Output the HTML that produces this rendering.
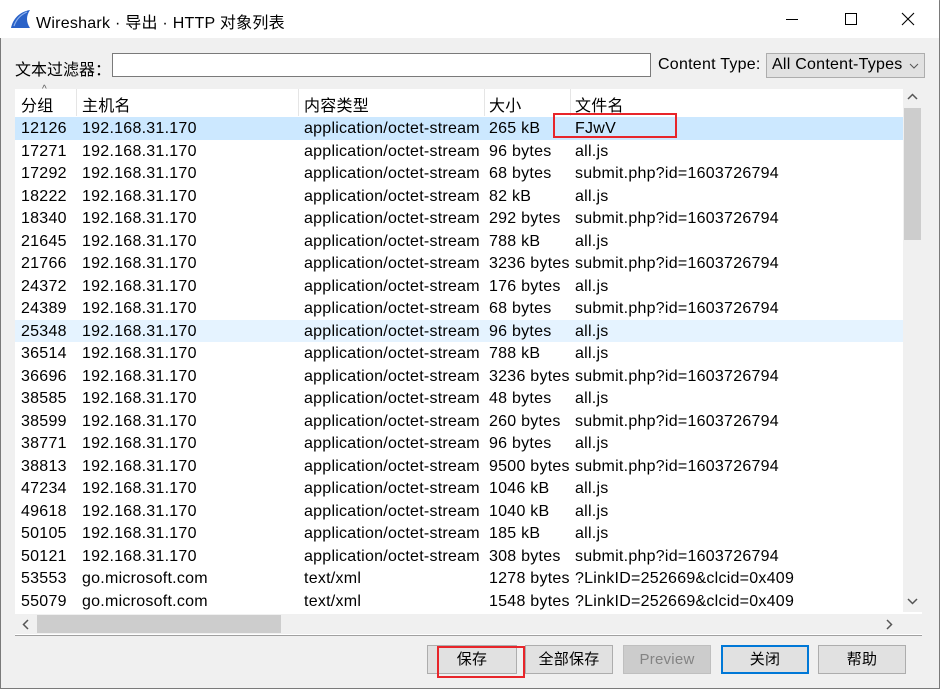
<!DOCTYPE html>
<html><head><meta charset="utf-8"><style>
*{margin:0;padding:0;box-sizing:border-box}
body{width:940px;height:689px;overflow:hidden;background:#f0f0f0;font-family:"Liberation Sans","Noto Sans CJK SC",sans-serif;font-size:16px;letter-spacing:0.25px;color:#000;position:relative}
.abs{position:absolute}
#win{position:absolute;left:0;top:0;width:940px;height:689px;border:1px solid #7a7a7a;border-top-color:#8a8a8a}
#title{position:absolute;left:0;top:0;width:939px;height:38px;background:#fff}
.row{position:absolute;left:15px;width:888px;height:22.5px;white-space:nowrap}
.row span{position:absolute;top:3px}
.btn{position:absolute;top:645px;height:29px;border:1px solid #adadad;background:#e1e1e1;text-align:center;line-height:27px;font-size:15px}
.cjk{letter-spacing:0}
</style></head><body>
<div id="win"></div>
<div id="title">
 <svg class="abs" style="left:10px;top:9px" width="22" height="20" viewBox="0 0 22 20"><path d="M1 19 C3 10 9 3 20 1 C16 7 16 13 20 19 Z" fill="#2a62c8"/><path d="M4 17 C6 11 10 6 17 3" stroke="#8fb2ec" stroke-width="1.2" fill="none"/></svg>
 <div class="abs" style="left:36px;top:9px;font-size:16px">Wireshark · 导出 · HTTP 对象列表</div>
 <div class="abs" style="left:786px;top:19px;width:12px;height:1px;background:#000"></div>
 <div class="abs" style="left:845px;top:13px;width:12px;height:12px;border:1px solid #000"></div>
 <svg class="abs" style="left:901px;top:12px" width="14" height="14"><path d="M1 1L13 13M13 1L1 13" stroke="#000" stroke-width="1.1"/></svg>
</div>
<div class="abs cjk" style="left:15px;top:56px">文本过滤器：</div>
<div class="abs" style="left:112px;top:53px;width:539px;height:24px;background:#fff;border:1px solid #7a7a7a"></div>
<div class="abs" style="left:658px;top:56px">Content Type:</div>
<div class="abs" style="left:766px;top:53px;width:159px;height:25px;background:#e1e1e1;border:1px solid #adadad"><span class="abs" style="left:5px;top:2px;white-space:nowrap">All Content-Types</span><svg class="abs" style="left:142px;top:8px" width="10" height="8"><path d="M1 2L5 6L9 2" stroke="#555" fill="none"/></svg></div>
<!-- table -->
<div class="abs" style="left:15px;top:89px;width:907px;height:546px;background:#fff"></div>
<div class="abs" style="left:15px;top:89px;width:888px;height:27px;background:#fff">
 <span class="abs" style="left:6px;top:3px">分组</span><span class="abs" style="left:27px;top:-5px;font-size:10px;color:#555">^</span>
 <span class="abs" style="left:67px;top:3px">主机名</span>
 <span class="abs" style="left:289px;top:3px">内容类型</span>
 <span class="abs" style="left:474px;top:3px">大小</span>
 <span class="abs" style="left:560px;top:3px">文件名</span>
 <div class="abs" style="left:61px;top:0;width:1px;height:27px;background:#e5e5e5"></div>
 <div class="abs" style="left:283px;top:0;width:1px;height:27px;background:#e5e5e5"></div>
 <div class="abs" style="left:469px;top:0;width:1px;height:27px;background:#e5e5e5"></div>
 <div class="abs" style="left:555px;top:0;width:1px;height:27px;background:#e5e5e5"></div>
</div>
<div id="rows"></div>
<div class="abs" style="left:553px;top:113px;width:124px;height:25px;border:2px solid #e8252a"></div>
<!-- vscroll -->
<div class="abs" style="left:903px;top:89px;width:19px;height:523px;background:#f0f0f0"></div>
<svg class="abs" style="left:907px;top:93px" width="11" height="8"><path d="M1 6L5.5 1.5L10 6" stroke="#555" stroke-width="1.5" fill="none"/></svg>
<div class="abs" style="left:904px;top:108px;width:17px;height:132px;background:#cdcdcd"></div>
<svg class="abs" style="left:907px;top:597px" width="11" height="8"><path d="M1 2L5.5 6.5L10 2" stroke="#555" stroke-width="1.5" fill="none"/></svg>
<!-- hscroll -->
<div class="abs" style="left:15px;top:614px;width:907px;height:20px;background:#f0f0f0"></div>
<svg class="abs" style="left:22px;top:619px" width="8" height="11"><path d="M6 1L1.5 5.5L6 10" stroke="#555" stroke-width="1.5" fill="none"/></svg>
<div class="abs" style="left:37px;top:615px;width:244px;height:18px;background:#cdcdcd"></div>
<svg class="abs" style="left:885px;top:619px" width="8" height="11"><path d="M2 1L6.5 5.5L2 10" stroke="#555" stroke-width="1.5" fill="none"/></svg>
<div class="abs" style="left:15px;top:635px;width:907px;height:1px;background:#a0a0a0"></div>
<!-- buttons -->
<div class="btn" style="left:427px;width:90px">保存</div>
<div class="abs" style="left:437px;top:646px;width:88px;height:32px;border:2px solid #e8252a"></div>
<div class="btn" style="left:525px;width:88px">全部保存</div>
<div class="btn" style="left:623px;width:88px;background:#cccccc;border-color:#bfbfbf;color:#838383">Preview</div>
<div class="btn" style="left:721px;width:88px;border:2px solid #0078d7;line-height:25px">关闭</div>
<div class="btn" style="left:818px;width:88px">帮助</div>
<script>
var d=[["12126","192.168.31.170","application/octet-stream","265 kB","FJwV"],
["17271","192.168.31.170","application/octet-stream","96 bytes","all.js"],
["17292","192.168.31.170","application/octet-stream","68 bytes","submit.php?id=1603726794"],
["18222","192.168.31.170","application/octet-stream","82 kB","all.js"],
["18340","192.168.31.170","application/octet-stream","292 bytes","submit.php?id=1603726794"],
["21645","192.168.31.170","application/octet-stream","788 kB","all.js"],
["21766","192.168.31.170","application/octet-stream","3236 bytes","submit.php?id=1603726794"],
["24372","192.168.31.170","application/octet-stream","176 bytes","all.js"],
["24389","192.168.31.170","application/octet-stream","68 bytes","submit.php?id=1603726794"],
["25348","192.168.31.170","application/octet-stream","96 bytes","all.js"],
["36514","192.168.31.170","application/octet-stream","788 kB","all.js"],
["36696","192.168.31.170","application/octet-stream","3236 bytes","submit.php?id=1603726794"],
["38585","192.168.31.170","application/octet-stream","48 bytes","all.js"],
["38599","192.168.31.170","application/octet-stream","260 bytes","submit.php?id=1603726794"],
["38771","192.168.31.170","application/octet-stream","96 bytes","all.js"],
["38813","192.168.31.170","application/octet-stream","9500 bytes","submit.php?id=1603726794"],
["47234","192.168.31.170","application/octet-stream","1046 kB","all.js"],
["49618","192.168.31.170","application/octet-stream","1040 kB","all.js"],
["50105","192.168.31.170","application/octet-stream","185 kB","all.js"],
["50121","192.168.31.170","application/octet-stream","308 bytes","submit.php?id=1603726794"],
["53553","go.microsoft.com","text/xml","1278 bytes","?LinkID=252669&amp;clcid=0x409"],
["55079","go.microsoft.com","text/xml","1548 bytes","?LinkID=252669&amp;clcid=0x409"]];
var x=[6,67,289,474,560],h="";
d.forEach(function(r,i){var bg=i==0?"#cce8ff":(i==9?"#e5f3ff":"transparent");
h+='<div class="row" style="top:'+(117+i*22.5)+'px;background:'+bg+'">';
r.forEach(function(c,j){h+='<span style="left:'+x[j]+'px">'+c+'</span>'});h+='</div>'});
document.getElementById("rows").innerHTML=h;
</script>
</body></html>
